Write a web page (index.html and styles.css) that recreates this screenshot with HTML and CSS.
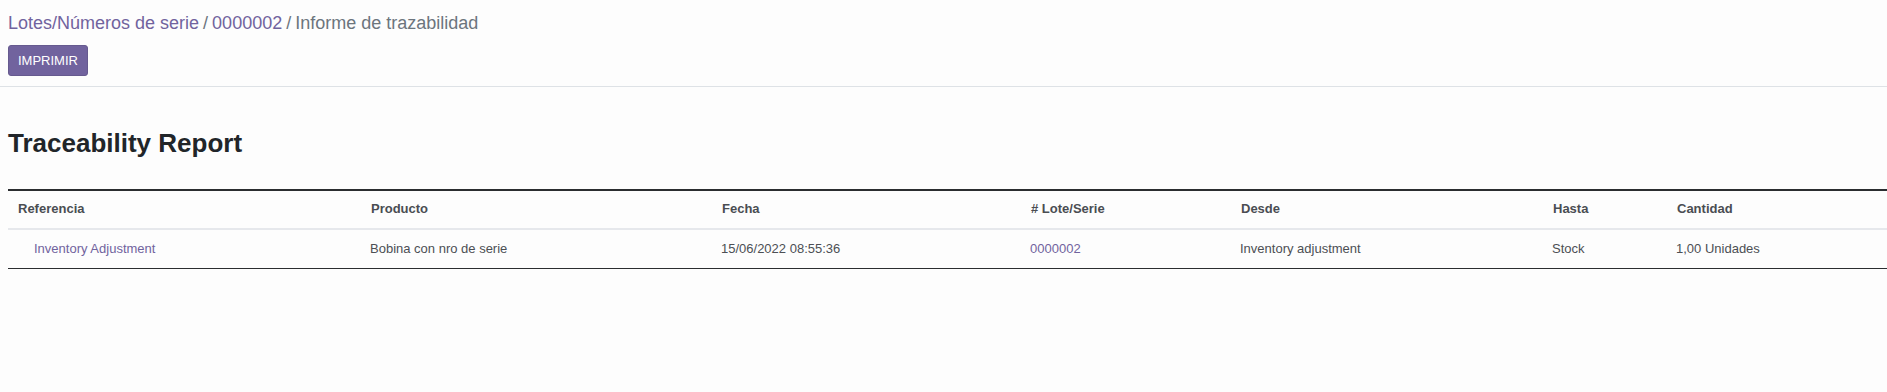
FILE: index.html
```html
<!DOCTYPE html>
<html>
<head>
  <title>Informe de trazabilidad</title>
  <link rel="stylesheet" href="styles.css">
</head>
<body>
  <div class="control-panel">
    <ol class="breadcrumb">
      <li class="breadcrumb-item"><a href="#">Lotes/Números de serie</a></li>
      <li class="breadcrumb-item"><a href="#">0000002</a></li>
      <li class="breadcrumb-item active">Informe de trazabilidad</li>
    </ol>
    <div class="cp-buttons">
      <button class="btn-primary">IMPRIMIR</button>
    </div>
  </div>

  <div class="report">
    <h1 class="report-title">Traceability Report</h1>
    <table class="report-table">
      <thead>
        <tr>
          <th class="col-ref">Referencia</th>
          <th class="col-product">Producto</th>
          <th class="col-date">Fecha</th>
          <th class="col-lot"># Lote/Serie</th>
          <th class="col-from">Desde</th>
          <th class="col-to">Hasta</th>
          <th class="col-qty">Cantidad</th>
        </tr>
      </thead>
      <tbody>
        <tr>
          <td><span class="indent"></span><a href="#">Inventory Adjustment</a></td>
          <td>Bobina con nro de serie</td>
          <td>15/06/2022 08:55:36</td>
          <td><a href="#">0000002</a></td>
          <td>Inventory adjustment</td>
          <td>Stock</td>
          <td>1,00 Unidades</td>
        </tr>
      </tbody>
    </table>
  </div>
</body>
</html>
```

FILE: styles.css
```css
body {
  margin: 0;
  background-color: #fdfdfd;
  font-family: "Liberation Sans", Arial, sans-serif;
  font-size: 13px;
  color: #4c4f54;
}

a {
  color: #71639e;
  text-decoration: none;
}

.control-panel {
  padding: 10px 8px 10px;
  border-bottom: 1px solid #dee2e6;
}

.breadcrumb {
  display: flex;
  margin: 0 0 8px;
  padding: 0;
  list-style: none;
  font-size: 18px;
  line-height: 27px;
}

.breadcrumb-item + .breadcrumb-item::before {
  content: "/";
  padding: 0 4px;
  color: #6c757d;
}

.breadcrumb-item.active {
  color: #6c757d;
}

.cp-buttons {
  display: flex;
}

.btn-primary {
  height: 31px;
  padding: 0 9px;
  border: 1px solid #665a8f;
  border-radius: 3px;
  background-color: #71639e;
  color: #fff;
  font-family: inherit;
  font-size: 13px;
  cursor: pointer;
}

.report {
  padding-left: 8px;
}

.report-title {
  margin: 41px 0 30px;
  font-size: 26px;
  line-height: 31px;
  font-weight: bold;
  color: #212529;
}

.report-table {
  width: 100%;
  border-collapse: collapse;
  table-layout: fixed;
  border-top: 2px solid #2b2d30;
  border-bottom: 1px solid #2b2d30;
}

.report-table th {
  padding: 8px 10px 9px;
  line-height: 20px;
  text-align: left;
  font-weight: bold;
  color: #4a4d52;
  border-bottom: 2px solid #e6e8ec;
}

.report-table td {
  padding: 9px 9px;
  line-height: 20px;
  white-space: nowrap;
}

.col-ref { width: 333px; }
.col-product { width: 331px; }
.col-date { width: 289px; }
.col-lot { width: 190px; }
.col-from { width: 292px; }
.col-to { width: 104px; }

.indent {
  display: inline-block;
  width: 17px;
}
```
